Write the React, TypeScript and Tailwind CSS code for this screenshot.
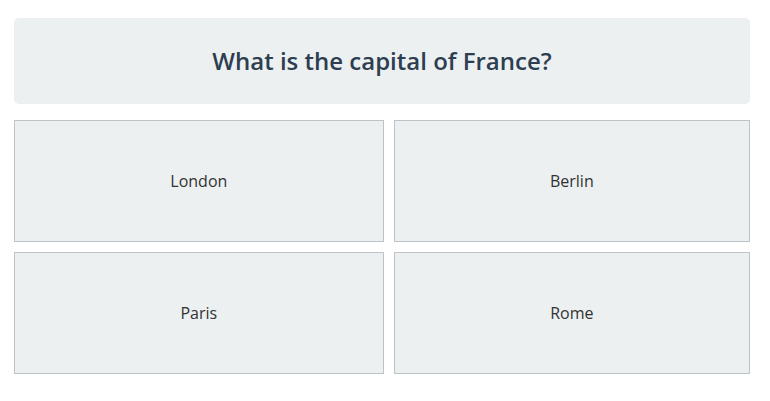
import React from 'react'

const answers = ["London", "Berlin", "Paris", "Rome"];

const App = () => {
    return (
        <div className="pt-[18px] pl-[14px] pr-[20px] bg-white min-h-screen" style={{ fontFamily: '"Open Sans", sans-serif' }}>
            {/* QUESTION */}
            <div className="bg-[#ecf0f1] rounded-[5px] h-[86px] flex items-center justify-center">
                <h1 className="text-[24px] font-semibold text-[#2c3e50] leading-none">What is the capital of France?</h1>
            </div>

            {/* ANSWERS */}
            <div className="grid grid-cols-[auto_auto] gap-[10px] mt-[16px]">
                {answers.map((answer) => (
                    <div
                        key={answer}
                        className="h-[122px] px-4 flex items-center justify-center bg-[#ecf0f1] border border-[#bdc3c7] text-[16px] text-[#333]"
                    >
                        {answer}
                    </div>
                ))}
            </div>
        </div>
    )
}

export default App
